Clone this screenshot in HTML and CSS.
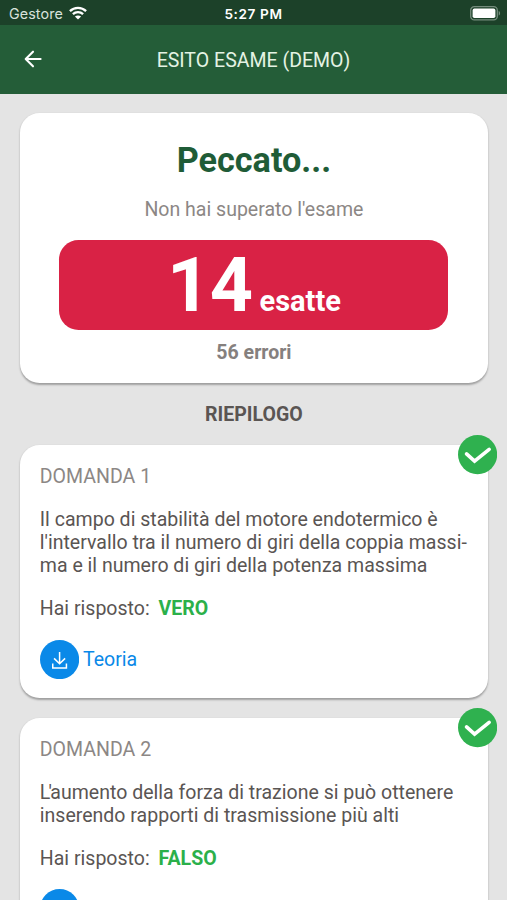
FILE: index.html
```html
<!DOCTYPE html>
<html lang="it">
<head>
<meta charset="utf-8">
<title>Esito esame</title>
<link rel="stylesheet" href="styles.css">
</head>
<body>
<div class="status">
  <div class="carrier"><span>Gestore</span>
    <svg class="wifi" viewBox="0 0 18 14"><g fill="none" stroke="#fff" stroke-width="2.3"><path d="M.9 5.1C5.4.7 12.6.7 17.1 5.1"/><path d="M3.9 8.2c2.9-2.8 7.3-2.8 10.2 0"/></g><path fill="#fff" d="M9 13.6 5.9 10.5c1.8-1.5 4.4-1.5 6.2 0z"/></svg>
  </div>
  <div class="clock">5:27 PM</div>
  <svg class="battery" viewBox="0 0 31 15"><rect x=".7" y=".7" width="26.6" height="13.2" rx="3.6" fill="none" stroke="#748c7c" stroke-width="1.3"/><rect x="2.6" y="2.6" width="22.8" height="9.4" rx="1.8" fill="#fff"/><path d="M28.7 5v4.6c1.9-.7 1.9-3.9 0-4.6z" fill="#748c7c"/></svg>
</div>
<header class="bar">
  <svg class="back" viewBox="0 0 18 18"><path d="M16.6 9H2M9 1.7 1.7 9 9 16.3" fill="none" stroke="#fff" stroke-width="2.1" stroke-linecap="round" stroke-linejoin="round"/></svg>
  <h1 class="title">ESITO ESAME (DEMO)</h1>
</header>
<main class="content">
  <section class="card result">
    <h2 class="headline">Peccato...</h2>
    <p class="outcome">Non hai superato l'esame</p>
    <div class="score"><span class="number">14</span><span class="unit">esatte</span></div>
    <p class="errors">56 errori</p>
  </section>
  <h3 class="section-title">RIEPILOGO</h3>
  <section class="card question">
    <svg class="badge" viewBox="0 0 39 39"><circle cx="19.5" cy="19.5" r="19.5" fill="#2fb14f"/><path d="m8.5 18.8 8 7.2L31 14.3" fill="none" stroke="#fff" stroke-width="3.6" stroke-linecap="round"/></svg>
    <p class="label">DOMANDA 1</p>
    <p class="text">Il campo di stabilità del motore endotermico è<br>l'intervallo tra il numero di giri della coppia massi-<br>ma e il numero di giri della potenza massima</p>
    <p class="answer">Hai risposto: <b>VERO</b></p>
    <div class="theory"><svg class="download" viewBox="0 0 39 39"><circle cx="19.5" cy="19.5" r="19.5" fill="#0a89e8"/><path d="M19.5 12v11.5M14 18.3l5.5 5.4 5.5-5.4M12.7 23.5v4.3h13.6v-4.3" fill="none" stroke="#fff" stroke-width="1.5"/></svg><span>Teoria</span></div>
  </section>
  <section class="card question">
    <svg class="badge" viewBox="0 0 39 39"><circle cx="19.5" cy="19.5" r="19.5" fill="#2fb14f"/><path d="m8.5 18.8 8 7.2L31 14.3" fill="none" stroke="#fff" stroke-width="3.6" stroke-linecap="round"/></svg>
    <p class="label">DOMANDA 2</p>
    <p class="text"><span class="tight">L'</span>aumento della forza di trazione si può ottenere<br>inserendo rapporti di trasmissione più alti</p>
    <p class="answer">Hai risposto: <b>FALSO</b></p>
    <div class="theory"><svg class="download" viewBox="0 0 39 39"><circle cx="19.5" cy="19.5" r="19.5" fill="#0a89e8"/></svg></div>
  </section>
</main>
</body>
</html>
```
FILE: styles.css
```css
* { box-sizing: border-box; }
html, body { height: 100%; overflow: hidden; }
body {
  margin: 0;
  background: #e4e4e4;
  color: #5a5553;
  font: 19.55px/23.27px Roboto, sans-serif;
}
h1, h2, h3, p { margin: 0; font-size: inherit; font-weight: 400; }
svg { display: block; flex: none; }

.status {
  display: grid;
  grid-template-columns: 1fr auto 1fr;
  align-items: center;
  height: 25px;
  padding: 2px 6px 0 9px;
  background: #1c4129;
  color: #fff;
  font: 14.3px/18px Inter, sans-serif;
}
.carrier { display: flex; align-items: center; gap: 6px; color: #d9e2dc; letter-spacing: .1px; }
.wifi { width: 18px; height: 14px; margin-top: -2px; }
.clock { margin-left: -3px; font-size: 13.6px; font-weight: 600; letter-spacing: .6px; }
.battery { width: 31px; height: 15px; justify-self: end; margin-top: -1px; }

.bar {
  display: grid;
  grid-template-columns: 60px 1fr 60px;
  align-items: center;
  height: 68.7px;
  background: #245d38;
}
.back { width: 18px; height: 18px; margin-left: 24px; }
.title { padding-top: 2px; text-align: center; color: #e4f3e4; }

.content { padding: 19.6px 19.4px 0 20.2px; }
.card {
  position: relative;
  background: #fff;
  border-radius: 19.6px;
  box-shadow: 0 1.5px 2px rgba(0, 0, 0, .3);
}
.result {
  height: 269.4px;
  padding: 27px 39.2px 0;
  text-align: center;
}
.headline { font-size: 34.2px; line-height: 41px; font-weight: 700; color: #1f5c37; }
.outcome { margin-top: 17px; color: #8c8785; }
.score {
  display: flex;
  justify-content: center;
  align-items: baseline;
  gap: 7px;
  height: 90px;
  margin: 18.4px 0 11px;
  border-radius: 19.6px;
  background: #d92245;
  color: #fff;
  font-weight: 700;
}
.number { font-size: 75.5px; line-height: 90px; letter-spacing: -.5px; }
.unit { font-size: 29px; }
.errors { font-weight: 700; color: #85807e; }
.section-title { margin: 20.4px 0 18.6px; text-align: center; font-weight: 700; }

.question {
  display: flex;
  flex-direction: column;
  gap: 19.6px;
  padding: 20.1px 19.6px 19.1px;
  margin-bottom: 20px;
}
.badge { position: absolute; top: -9.6px; right: -9.8px; width: 39.2px; height: 39.2px; }
.label { color: #8c8785; }
.text { white-space: nowrap; }
.tight { letter-spacing: -1.7px; }
.answer b { margin-left: 4px; color: #2bb04a; }
.theory { display: flex; align-items: center; gap: 4px; margin-top: -.5px; color: #0a89e8; }
.theory span { padding-top: 1px; }
.download { width: 39.2px; height: 39.2px; }
```
